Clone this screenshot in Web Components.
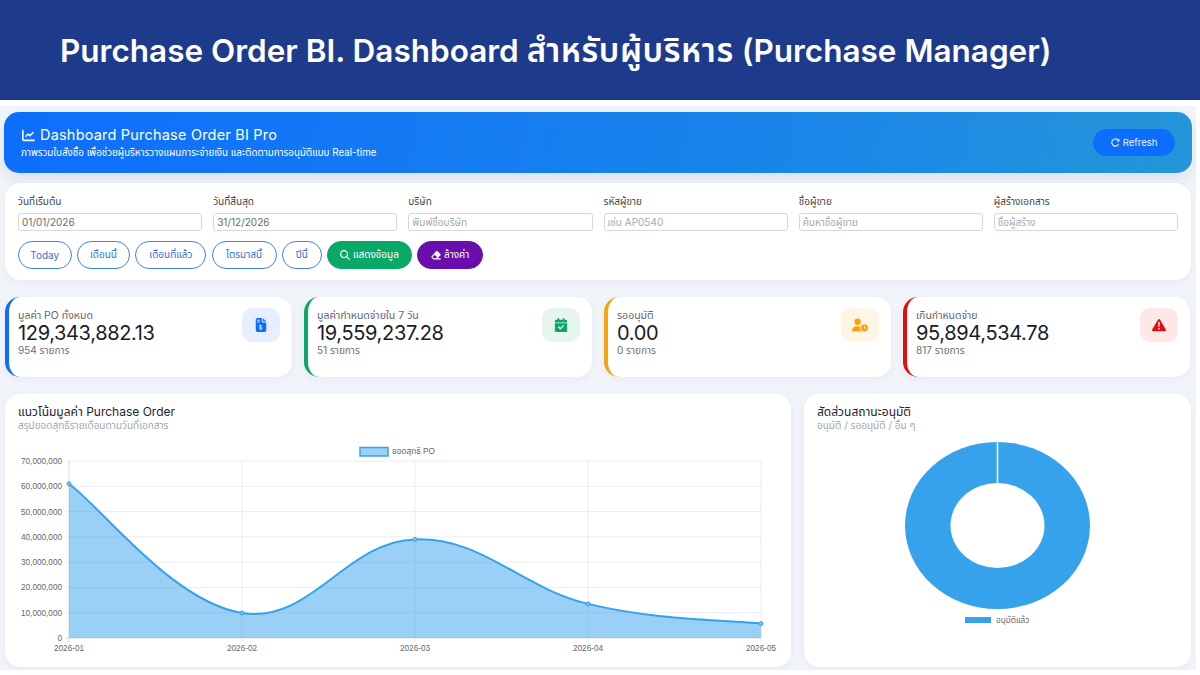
<!DOCTYPE html>
<html lang="th">
<head>
<meta charset="utf-8">
<title>Purchase Order BI</title>
<style>
  html, body { margin: 0; padding: 0; background: #fff; }
  body { width: 1200px; height: 675px; overflow: hidden; font-family: Inter, "Noto Sans", sans-serif; }
  .sheet { width: 1196px; height: 564px; margin-top: 6px; background: #f1f4f9; box-sizing: border-box; padding: 6px 5px 0 5px; display: flex; flex-direction: column; }
  .filters-gap { height: 10px; flex: none; }
  .kpis { display: grid; grid-template-columns: 287px 288px 287px 287px; column-gap: 12px; margin-top: 17px; }
  .charts { display: grid; grid-template-columns: 786px 387px; column-gap: 13px; margin-top: 17px; }
  .th { font-size: 33px; letter-spacing: .6px; }
</style>
</head>
<body>
<po-banner>Purchase Order BI. Dashboard <span class="th">สำหรับผู้บริหาร</span> (Purchase Manager)</po-banner>
<div class="sheet">
  <po-hero heading="Dashboard Purchase Order BI Pro" sub="ภาพรวมใบสั่งซื้อ เพื่อช่วยผู้บริหารวางแผนภาระจ่ายเงิน และติดตามการอนุมัติแบบ Real-time"></po-hero>
  <div class="filters-gap"></div>
  <po-filters>
    <po-field slot="field" label="วันที่เริ่มต้น" value="01/01/2026"></po-field>
    <po-field slot="field" label="วันที่สิ้นสุด" value="31/12/2026"></po-field>
    <po-field slot="field" label="บริษัท" placeholder="พิมพ์ชื่อบริษัท"></po-field>
    <po-field slot="field" label="รหัสผู้ขาย" placeholder="เช่น AP0540"></po-field>
    <po-field slot="field" label="ชื่อผู้ขาย" placeholder="ค้นหาชื่อผู้ขาย"></po-field>
    <po-field slot="field" label="ผู้สร้างเอกสาร" placeholder="ชื่อผู้สร้าง"></po-field>
    <po-btn slot="action" w="53.5">Today</po-btn>
    <po-btn slot="action" w="53.5">เดือนนี้</po-btn>
    <po-btn slot="action" w="71">เดือนที่แล้ว</po-btn>
    <po-btn slot="action" w="65">ไตรมาสนี้</po-btn>
    <po-btn slot="action" w="40">ปีนี้</po-btn>
    <po-btn slot="action" w="85" kind="go" icon="search">แสดงข้อมูล</po-btn>
    <po-btn slot="action" w="66" kind="clear" icon="eraser">ล้างค่า</po-btn>
  </po-filters>
  <div class="kpis">
    <po-kpi color="#0d6efd" tint="#e7effe" icon="invoice" label="มูลค่า PO ทั้งหมด" value="129,343,882.13" note="954 รายการ"></po-kpi>
    <po-kpi color="#0aa866" tint="#e7f5ef" icon="calendar" label="มูลค่ากำหนดจ่ายใน 7 วัน" value="19,559,237.28" note="51 รายการ"></po-kpi>
    <po-kpi color="#f5a50b" tint="#fef5e5" icon="userclock" label="รออนุมัติ" value="0.00" note="0 รายการ"></po-kpi>
    <po-kpi color="#e01010" tint="#fde8e7" icon="warning" label="เกินกำหนดจ่าย" value="95,894,534.78" note="817 รายการ"></po-kpi>
  </div>
  <div class="charts">
    <po-card heading="แนวโน้มมูลค่า Purchase Order" sub="สรุปยอดสุทธิรายเดือนตามวันที่เอกสาร"><po-line-chart></po-line-chart></po-card>
    <po-card heading="สัดส่วนสถานะอนุมัติ" sub="อนุมัติ / รออนุมัติ / อื่น ๆ"><po-donut></po-donut></po-card>
  </div>
</div>

<script>
const THAI = 'Inter, "Noto Sans Thai", "Noto Sans", sans-serif';
const CHART_FONT = '"Liberation Sans", "Noto Sans Thai", "Noto Sans", sans-serif';

const ICONS = {
  line: '<svg viewBox="0 0 512 512" fill="currentColor"><path d="M32 32a32 32 0 0 1 32 32v336a16 16 0 0 0 16 16h400a32 32 0 0 1 0 64H80a80 80 0 0 1-80-80V64a32 32 0 0 1 32-32z"/><path d="M150 290l90-90 70 70 130-130" fill="none" stroke="currentColor" stroke-width="56" stroke-linecap="round" stroke-linejoin="round"/></svg>',
  refresh: '<svg viewBox="0 0 512 512" fill="currentColor"><path d="M370 130a172 172 0 1 0 40 190l60 24a236 236 0 1 1-56-258l40-40c8-8 26-4 26 12v130c0 10-8 18-18 18H334c-16 0-22-18-12-28z"/></svg>',
  search: '<svg viewBox="0 0 512 512" fill="currentColor"><path d="M416 208c0 46-15 88-40 123l127 126a32 32 0 0 1-46 46L331 376a208 208 0 1 1 85-168zM208 352a144 144 0 1 0 0-288 144 144 0 0 0 0 288z"/></svg>',
  eraser: '<svg viewBox="0 0 576 512" fill="currentColor"><path d="M290 40a64 64 0 0 1 90 0l156 156a64 64 0 0 1 0 90L372 448h164a32 32 0 0 1 0 64H160a64 64 0 0 1-46-19L40 419a64 64 0 0 1 0-90zM199 252L85 366l77 82h120l77-82z"/></svg>',
  invoice: '<svg viewBox="0 0 384 512" fill="currentColor"><path fill-rule="evenodd" d="M64 0C29 0 0 29 0 64v384c0 35 29 64 64 64h256c35 0 64-29 64-64V160H256c-18 0-32-14-32-32V0zm192 0v128h128zM56 64h88v32H56zm0 64h88v32H56zm136 120v20c12 2 24 5 34 8l-8 30c-14-4-40-10-52-6-10 4-10 14 0 18l26 8c28 8 50 22 44 54-4 20-22 32-44 36v20h-32v-22c-14-2-28-7-38-11l10-30c14 6 40 14 54 10 10-4 12-14 0-20l-28-8c-22-8-46-22-42-52 4-20 20-32 44-36v-19z"/></svg>',
  calendar: '<svg viewBox="0 0 448 512" fill="currentColor"><path fill-rule="evenodd" d="M128 0a32 32 0 0 1 32 32v32h128V32a32 32 0 0 1 64 0v32h48c26 0 48 22 48 48v48H0v-48c0-26 22-48 48-48h48V32a32 32 0 0 1 32-32zM0 192h448v272c0 26-22 48-48 48H48c-26 0-48-22-48-48zm329 71a24 24 0 0 0-34 0L200 358l-47-47a24 24 0 0 0-34 34l64 64a24 24 0 0 0 34 0l112-112a24 24 0 0 0 0-34z"/></svg>',
  userclock: '<svg viewBox="0 0 640 512" fill="currentColor"><path fill-rule="evenodd" d="M224 0a128 128 0 1 1 0 256 128 128 0 0 1 0-256zM178 304h92c20 0 38 3 56 9-4 18-6 36-6 55 0 55 25 106 66 144H30c-17 0-30-13-30-30 0-98 80-178 178-178zM496 224a144 144 0 1 1 0 288 144 144 0 0 1 0-288zm-16 64v80c0 8 4 12 8 14l56 30 14-28-46-24v-72z"/></svg>',
  warning: '<svg viewBox="0 0 512 512" fill="currentColor"><path fill-rule="evenodd" d="M256 32c14 0 27 8 34 20l216 368c7 12 7 27 0 40s-20 20-34 20H40c-14 0-27-8-34-20s-7-28 0-40L222 52c7-12 20-20 34-20zm-28 136v128a28 28 0 0 0 56 0V168a28 28 0 0 0-56 0zm28 256a32 32 0 1 0 0-64 32 32 0 0 0 0 64z"/></svg>'
};

customElements.define('po-banner', class extends HTMLElement {
  constructor() {
    super();
    this.attachShadow({ mode: 'open' }).innerHTML = `
      <style>
        :host { display: flex; align-items: center; height: 100px; background: #1e3a8a; padding-left: 60px; box-sizing: border-box; }
        div { color: #fff; font: 600 31.5px/1 ${THAI}; white-space: nowrap; }
      </style>
      <div><slot></slot></div>`;
  }
});

customElements.define('po-hero', class extends HTMLElement {
  connectedCallback() {
    this.attachShadow({ mode: 'open' }).innerHTML = `
      <style>
        :host { display: flex; height: 61px; align-items: center; justify-content: space-between; margin-left: -1px; margin-right: -1px;
          padding: 0 17px; border-radius: 15px; color: #fff; background: linear-gradient(100deg, #0d6efd 0%, #1a87e8 70%, #2596d8 100%);
          box-shadow: 0 6px 14px rgba(40,60,100,.1); font-family: ${THAI}; }
        .h { display: flex; align-items: center; gap: 4px; font-size: 14.5px; line-height: 18px; letter-spacing: .2px; }
        .h svg { width: 15px; height: 13px; }
        .s { font-size: 9.8px; line-height: 13px; margin-top: 2px; white-space: nowrap; }
        button { all: unset; width: 82px; height: 27px; border-radius: 14px; background: #0d6efd; display: flex; align-items: center; justify-content: center; gap: 3px; font-size: 9.5px; color: #e8f1ff; }
        button svg { width: 9px; height: 9px; }
      </style>
      <div>
        <div class="h">${ICONS.line}<span>${this.getAttribute('heading')}</span></div>
        <div class="s">${this.getAttribute('sub')}</div>
      </div>
      <button>${ICONS.refresh}<span>Refresh</span></button>`;
  }
});

customElements.define('po-filters', class extends HTMLElement {
  constructor() {
    super();
    this.attachShadow({ mode: 'open' }).innerHTML = `
      <style>
        :host { display: block; height: 97px; box-sizing: border-box; padding: 11px 13px 0 13px; background: #fff; border-radius: 16px; box-shadow: 0 2px 8px rgba(40,60,100,.05); }
        .fields { display: grid; grid-template-columns: repeat(6, 1fr); column-gap: 11px; }
        .actions { display: flex; gap: 5.2px; margin-top: 10px; }
      </style>
      <div class="fields"><slot name="field"></slot></div>
      <div class="actions"><slot name="action"></slot></div>`;
  }
});

customElements.define('po-field', class extends HTMLElement {
  connectedCallback() {
    const value = this.getAttribute('value');
    const text = value || this.getAttribute('placeholder');
    this.attachShadow({ mode: 'open' }).innerHTML = `
      <style>
        :host { display: block; font-family: ${THAI}; }
        label { display: block; font-size: 10px; line-height: 14px; color: #3f4650; margin-bottom: 5px; }
        .box { height: 18px; box-sizing: border-box; border: 1px solid #d5d9de; border-radius: 3px; padding: 0 3px; font-size: 10px; line-height: 16px; color: ${value ? '#666c74' : '#a4a9af'}; white-space: nowrap; overflow: hidden; }
      </style>
      <label>${this.getAttribute('label')}</label>
      <div class="box">${text}</div>`;
  }
});

customElements.define('po-btn', class extends HTMLElement {
  connectedCallback() {
    const kind = this.getAttribute('kind');
    const icon = this.getAttribute('icon');
    const look = kind === 'go' ? 'background:#0aa866;color:#fff;border-color:#0aa866'
      : kind === 'clear' ? 'background:#6a0dad;color:#fff;border-color:#6a0dad'
      : 'background:#fff;color:#2f74d8;border-color:#3f83e6';
    this.attachShadow({ mode: 'open' }).innerHTML = `
      <style>
        :host { display: block; width: ${this.getAttribute('w')}px; font-family: ${THAI}; }
        div { height: 28px; box-sizing: border-box; border: 1px solid; border-radius: 14px; display: flex; align-items: center; justify-content: center; gap: 3px; font-size: 10px; white-space: nowrap; ${look} }
        svg { width: 10px; height: 10px; flex: none; }
      </style>
      <div>${icon ? ICONS[icon] : ''}<span><slot></slot></span></div>`;
  }
});

customElements.define('po-kpi', class extends HTMLElement {
  connectedCallback() {
    const color = this.getAttribute('color');
    this.attachShadow({ mode: 'open' }).innerHTML = `
      <style>
        :host { display: flex; justify-content: space-between; height: 80px; box-sizing: border-box; padding: 11px 12px 0 9px; background: #fff; border-left: 4px solid ${color}; border-radius: 15px; box-shadow: 0 2px 8px rgba(40,60,100,.05); font-family: ${THAI}; }
        .t { padding-top: 1px; }
        .l { font-size: 10.5px; line-height: 13px; color: #5f6670; }
        .v { font-size: 20px; line-height: 22px; color: #161d2b; letter-spacing: -.35px; }
        .n { font-size: 10px; line-height: 12px; color: #6b7078; }
        .i { width: 38px; height: 34px; border-radius: 10px; display: flex; align-items: center; justify-content: center; background: ${this.getAttribute('tint')}; color: ${color}; }
        .i svg { height: 14px; width: 16px; }
      </style>
      <div class="t">
        <div class="l">${this.getAttribute('label')}</div>
        <div class="v">${this.getAttribute('value')}</div>
        <div class="n">${this.getAttribute('note')}</div>
      </div>
      <div class="i">${ICONS[this.getAttribute('icon')]}</div>`;
  }
});

customElements.define('po-card', class extends HTMLElement {
  connectedCallback() {
    this.attachShadow({ mode: 'open' }).innerHTML = `
      <style>
        :host { display: block; height: 273px; box-sizing: border-box; padding: 11px 0 0 13px; background: #fff; border-radius: 15px; box-shadow: 0 2px 8px rgba(40,60,100,.05); font-family: ${THAI}; }
        .t { font-size: 12px; line-height: 14px; color: #1c2430; }
        .s { font-size: 10px; line-height: 12px; color: #a2a8b0; }
      </style>
      <div class="t">${this.getAttribute('heading')}</div>
      <div class="s">${this.getAttribute('sub')}</div>
      <slot></slot>`;
  }
});

customElements.define('po-line-chart', class extends HTMLElement {
  connectedCallback() {
    // canvas origin is x=18, y=437 in page terms
    const W = 770, H = 228, ox = 18, oy = 437;
    const px = x => x - ox, py = y => y - oy;
    const left = px(69), right = px(761), top = py(461), bottom = py(638);
    const months = ['2026-01', '2026-02', '2026-03', '2026-04', '2026-05'];
    const data = [61000000, 9900000, 39000000, 13500000, 5700000];
    const step = (right - left) / 4;
    const pts = data.map((v, i) => [left + i * step, bottom - (v / 70000000) * (bottom - top)]);

    // same bezier smoothing the chart lib uses, tension .4
    const t = 0.4;
    let d = `M${pts[0][0]} ${pts[0][1]}`;
    for (let i = 0; i < pts.length - 1; i++) {
      const p0 = pts[i - 1] || pts[i], p1 = pts[i], p2 = pts[i + 1], p3 = pts[i + 2] || p2;
      const c1 = [p1[0] + (p2[0] - p0[0]) * t / 2, p1[1] + (p2[1] - p0[1]) * t / 2];
      const c2 = [p2[0] - (p3[0] - p1[0]) * t / 2, p2[1] - (p3[1] - p1[1]) * t / 2];
      d += `C${c1[0]} ${c1[1]} ${c2[0]} ${c2[1]} ${p2[0]} ${p2[1]}`;
    }

    let grid = '', labels = '';
    for (let i = 0; i <= 7; i++) {
      const y = bottom - i * (bottom - top) / 7;
      grid += `<line x1="${left - 4}" x2="${right}" y1="${y}" y2="${y}" stroke="${i === 0 ? '#d9dce0' : '#eaecef'}"/>`;
      labels += `<text x="${left - 7}" y="${y + 3}" text-anchor="end">${i === 0 ? '0' : (i * 10000000).toLocaleString('en-US')}</text>`;
    }
    months.forEach((m, i) => {
      const x = left + i * step;
      grid += `<line x1="${x}" x2="${x}" y1="${top}" y2="${bottom + 4}" stroke="${i === 0 ? '#d9dce0' : '#eaecef'}"/>`;
      labels += `<text x="${x}" y="${bottom + 13}" text-anchor="middle">${m}</text>`;
    });

    this.attachShadow({ mode: 'open' }).innerHTML = `
      <style>
        :host { display: block; margin-top: 6px; }
        svg { display: block; width: ${W}px; height: ${H}px; font-family: ${CHART_FONT}; }
        text { font-size: 8.2px; fill: #666; }
      </style>
      <svg viewBox="0 0 ${W} ${H}">
        <rect x="${px(360)}" y="${py(447.5)}" width="28" height="8.5" fill="#9ad0f5" stroke="#36a2eb" stroke-width="1.5"/>
        <text x="${px(392)}" y="${py(454)}">ยอดสุทธิ PO</text>
        ${grid}${labels}
        <path d="${d}L${right} ${bottom}L${left} ${bottom}Z" fill="rgba(54,162,235,.5)"/>
        <path d="${d}" fill="none" stroke="#36a2eb" stroke-width="2"/>
        ${pts.map(p => `<circle cx="${p[0]}" cy="${p[1]}" r="2" fill="#7cc0f0" stroke="#36a2eb"/>`).join('')}
      </svg>`;
  }
});

customElements.define('po-donut', class extends HTMLElement {
  connectedCallback() {
    const ox = 817, oy = 437;
    const cx = 997.5 - ox, cy = 525.5 - oy;
    this.attachShadow({ mode: 'open' }).innerHTML = `
      <style>
        :host { display: block; margin-top: 6px; }
        svg { display: block; width: 374px; height: 228px; font-family: ${CHART_FONT}; }
        text { font-size: 8.2px; fill: #666; }
      </style>
      <svg viewBox="0 0 374 228">
        <ellipse cx="${cx}" cy="${cy}" rx="92.5" ry="83.5" fill="#36a2eb"/>
        <ellipse cx="${cx}" cy="${cy}" rx="47" ry="42.5" fill="#fff"/>
        <line x1="${cx}" x2="${cx}" y1="${cy - 84}" y2="${cy - 42}" stroke="#fff" stroke-width="1.5"/>
        <rect x="${965 - ox}" y="${617 - oy}" width="26" height="6" fill="#36a2eb"/>
        <text x="${996 - ox}" y="${623 - oy}">อนุมัติแล้ว</text>
      </svg>`;
  }
});
</script>
</body>
</html>
